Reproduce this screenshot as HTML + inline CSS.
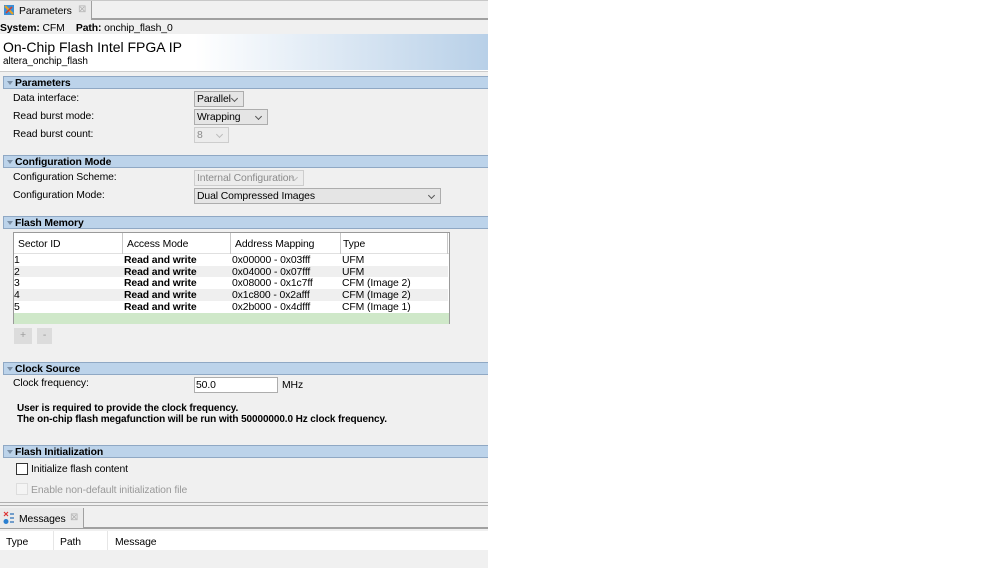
<!DOCTYPE html>
<html><head><meta charset="utf-8"><style>
*{margin:0;padding:0;box-sizing:border-box}
body{width:998px;height:568px;background:#fff;font-family:"Liberation Sans","DejaVu Sans",sans-serif;font-size:10.4px;letter-spacing:-0.1px;color:#000;position:relative;overflow:hidden}
.a{position:absolute;white-space:nowrap}
#panel{position:absolute;left:0;top:0;width:488px;height:568px;background:#f0f0f0}
.sec{position:absolute;left:3px;width:485px;height:13px;background:#bcd3ea;border:1px solid #8fa8c4;border-right:none;font-weight:bold;font-size:10.4px;line-height:13px;padding-left:11px}
.sec:before{content:"";position:absolute;left:3px;top:4px;border-left:3px solid transparent;border-right:3px solid transparent;border-top:4px solid #7a8ea5}
.dd{position:absolute;height:16px;background:#e5e5e5;border:1px solid #adadad;line-height:15px;padding-left:2px}
.dd:after{content:"";position:absolute;right:6px;top:4px;width:4px;height:4px;border-right:1px solid #555;border-bottom:1px solid #555;transform:rotate(45deg)}
.dis{color:#8a8a8a;border-color:#cdcdcd;background:#ececec}
.dis:after{border-color:#bbb}
.row{position:absolute;left:1px;width:434px;height:11.7px;line-height:13px}
.row span{position:absolute;top:0}
</style></head><body>
<div id="panel">
 <div class="a" style="left:0;top:0;width:488px;height:20px;background:#f0f0f0;border-top:1px solid #c8c8c8;border-bottom:2px solid #a0a0a0"></div>
 <div class="a" style="left:0;top:1px;width:92px;height:19px;background:#eaeaea;border-right:1px solid #a0a0a0"></div>
 <svg class="a" style="left:3px;top:4px" width="12" height="12"><rect x="1" y="1" width="10" height="10" fill="#3b8fd6"/><path d="M2 2l8 8" stroke="#e8a020" stroke-width="2"/><path d="M3 9l6-6" stroke="#d24030" stroke-width="1.5"/></svg>
 <div class="a" style="left:19px;top:6px">Parameters</div>
 <div class="a" style="left:78px;top:4px;color:#b0b0b0;font-size:10px">⊠</div>
 <div class="a" style="left:0;top:23px"><b>System:</b> CFM &nbsp;&nbsp;&nbsp;<b>Path:</b> onchip_flash_0</div>
 <div class="a" style="left:0;top:34px;width:488px;height:37px;background:linear-gradient(to right,#fff 0%,#fff 40%,#b8d0e8 100%);border-bottom:1px solid #fff"></div>
 <div class="a" style="left:3px;top:39px;font-size:14px;letter-spacing:0">On-Chip Flash Intel FPGA IP</div>
 <div class="a" style="left:3px;top:56px;font-size:10px">altera_onchip_flash</div>
 <div class="a" style="left:0;top:71px;width:488px;height:3px;background:#f0f0f0;border-top:1px solid #ccc"></div>

 <div class="sec" style="top:76px">Parameters</div>
 <div class="a" style="left:13px;top:93px">Data interface:</div>
 <div class="dd" style="left:194px;top:91px;width:50px">Parallel</div>
 <div class="a" style="left:13px;top:111px">Read burst mode:</div>
 <div class="dd" style="left:194px;top:109px;width:74px">Wrapping</div>
 <div class="a" style="left:13px;top:129px">Read burst count:</div>
 <div class="dd dis" style="left:194px;top:127px;width:35px">8</div>

 <div class="sec" style="top:155px">Configuration Mode</div>
 <div class="a" style="left:13px;top:172px">Configuration Scheme:</div>
 <div class="dd dis" style="left:194px;top:170px;width:110px">Internal Configuration</div>
 <div class="a" style="left:13px;top:190px">Configuration Mode:</div>
 <div class="dd" style="left:194px;top:188px;width:247px">Dual Compressed Images</div>

 <div class="sec" style="top:216px">Flash Memory</div>
 <div class="a" style="left:13px;top:232px;width:437px;height:92px;background:#fff;border:1px solid #9a9a9a">
  <div class="a" style="left:0;top:0;width:435px;height:21px;border-bottom:1px solid #e0e0e0"></div>
  <div class="a" style="left:4px;top:6px">Sector ID</div>
  <div class="a" style="left:113px;top:6px">Access Mode</div>
  <div class="a" style="left:221px;top:6px">Address Mapping</div>
  <div class="a" style="left:329px;top:6px">Type</div>
  <div class="a" style="left:108px;top:0;width:1px;height:79px;background:#c8c8c8"></div>
  <div class="a" style="left:216px;top:0;width:1px;height:79px;background:#c8c8c8"></div>
  <div class="a" style="left:326px;top:0;width:1px;height:79px;background:#c8c8c8"></div>
  <div class="a" style="left:433px;top:0;width:1px;height:79px;background:#c8c8c8"></div>
  <div class="row" style="top:21px;left:0;background:#fff"><span style="left:0">1</span><span style="left:110px;font-weight:bold">Read and write</span><span style="left:218px">0x00000 - 0x03fff</span><span style="left:328px">UFM</span></div>
  <div class="row" style="top:32.7px;left:0;background:#efefef"><span style="left:0">2</span><span style="left:110px;font-weight:bold">Read and write</span><span style="left:218px">0x04000 - 0x07fff</span><span style="left:328px">UFM</span></div>
  <div class="row" style="top:44.4px;left:0;background:#fff"><span style="left:0">3</span><span style="left:110px;font-weight:bold">Read and write</span><span style="left:218px">0x08000 - 0x1c7ff</span><span style="left:328px">CFM (Image 2)</span></div>
  <div class="row" style="top:56.1px;left:0;background:#efefef"><span style="left:0">4</span><span style="left:110px;font-weight:bold">Read and write</span><span style="left:218px">0x1c800 - 0x2afff</span><span style="left:328px">CFM (Image 2)</span></div>
  <div class="row" style="top:67.8px;left:0;background:#fff"><span style="left:0">5</span><span style="left:110px;font-weight:bold">Read and write</span><span style="left:218px">0x2b000 - 0x4dfff</span><span style="left:328px">CFM (Image 1)</span></div>
  <div class="a" style="left:0;top:79.5px;width:435px;height:11px;background:#cfe8c9"></div>
 </div>
 <div class="a" style="left:14px;top:328px;width:18px;height:16px;background:#dcdcdc;color:#999;text-align:center;line-height:16px">+</div>
 <div class="a" style="left:37px;top:328px;width:15px;height:16px;background:#dcdcdc;color:#999;text-align:center;line-height:16px">-</div>

 <div class="sec" style="top:362px">Clock Source</div>
 <div class="a" style="left:13px;top:378px">Clock frequency:</div>
 <div class="a" style="left:194px;top:377px;width:84px;height:16px;background:#fff;border:1px solid #adadad;line-height:15px;padding-left:1px">50.0</div>
 <div class="a" style="left:282px;top:380px">MHz</div>
 <div class="a" style="left:17px;top:403px;font-weight:bold;font-size:10px">User is required to provide the clock frequency.</div>
 <div class="a" style="left:17px;top:414px;font-weight:bold;font-size:10px">The on-chip flash megafunction will be run with 50000000.0 Hz clock frequency.</div>

 <div class="sec" style="top:445px">Flash Initialization</div>
 <div class="a" style="left:16px;top:463px;width:12px;height:12px;background:#fff;border:1px solid #333"></div>
 <div class="a" style="left:31px;top:464px">Initialize flash content</div>
 <div class="a" style="left:16px;top:483px;width:12px;height:12px;background:#f4f4f4;border:1px solid #ddd"></div>
 <div class="a" style="left:31px;top:485px;color:#999">Enable non-default initialization file</div>

 <div class="a" style="left:0;top:502px;width:488px;height:1px;background:#b0b0b0"></div>
 <div class="a" style="left:0;top:505px;width:488px;height:1px;background:#b0b0b0"></div>
 <div class="a" style="left:0;top:507px;width:488px;height:22px;border-bottom:2px solid #a0a0a0;background:#f0f0f0"></div>
 <div class="a" style="left:0;top:508px;width:84px;height:20px;background:#eaeaea;border-right:1px solid #a0a0a0"></div>
 <svg class="a" style="left:3px;top:511px" width="12" height="14"><path d="M1 1l4 4M5 1l-4 4" stroke="#d33" stroke-width="1.2"/><circle cx="3" cy="10.5" r="2.5" fill="#2a7fd0"/><path d="M7 3h4M7 7h4M7 11h4" stroke="#2a6fb8" stroke-width="1.3"/></svg>
 <div class="a" style="left:19px;top:514px">Messages</div>
 <div class="a" style="left:70px;top:512px;color:#b0b0b0;font-size:10px">⊠</div>
 <div class="a" style="left:0;top:531px;width:488px;height:19px;background:#fff"></div>
 <div class="a" style="left:53px;top:531px;width:1px;height:19px;background:#e6e6e6"></div>
 <div class="a" style="left:107px;top:531px;width:1px;height:19px;background:#e6e6e6"></div>
 <div class="a" style="left:6px;top:537px">Type</div>
 <div class="a" style="left:60px;top:537px">Path</div>
 <div class="a" style="left:115px;top:537px">Message</div>
</div>
</body></html>
